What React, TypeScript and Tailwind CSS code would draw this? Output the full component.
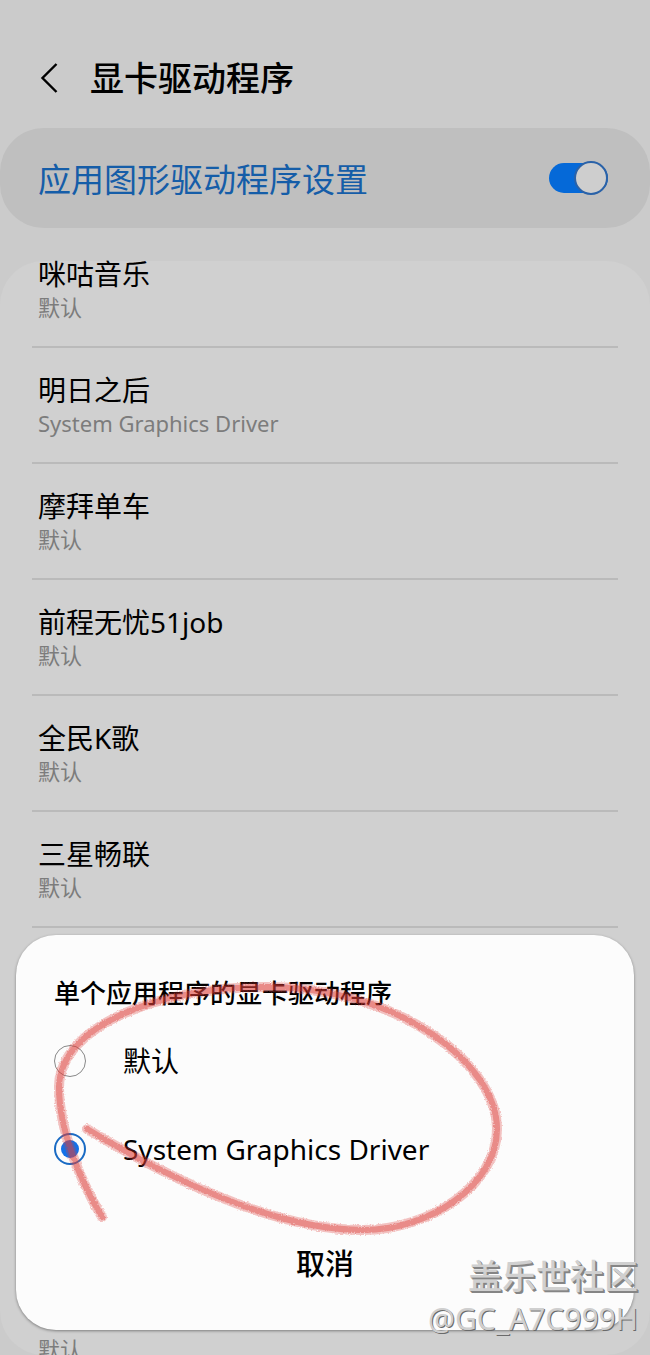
import { useState } from "react";

interface AppEntry {
  name: string;
  driver: string;
}

const DEFAULT_DRIVER = "默认";
const SYSTEM_DRIVER = "System Graphics Driver";

const apps: AppEntry[] = [
  { name: "咪咕音乐", driver: DEFAULT_DRIVER },
  { name: "明日之后", driver: SYSTEM_DRIVER },
  { name: "摩拜单车", driver: DEFAULT_DRIVER },
  { name: "前程无忧51job", driver: DEFAULT_DRIVER },
  { name: "全民K歌", driver: DEFAULT_DRIVER },
  { name: "三星畅联", driver: DEFAULT_DRIVER },
];

export default function App() {
  const [enabled, setEnabled] = useState(true);

  return (
    <div className="relative flex min-h-screen flex-col overflow-hidden bg-[#cbcbcb] font-['Noto_Sans','Noto_Sans_CJK_SC',sans-serif] text-black">
      <header className="flex h-32 items-center gap-7 px-9 pt-7">
        <button type="button" aria-label="返回" className="flex w-[26px] justify-center">
          <svg width="18" height="32" viewBox="0 0 18 32" fill="none" stroke="currentColor" strokeWidth="2.4">
            <path d="M16.5 2 2.5 16l14 14" />
          </svg>
        </button>
        <h1 className="text-[34px] leading-10 font-medium">显卡驱动程序</h1>
      </header>

      <label className="flex h-[100px] items-center justify-between rounded-[44px] bg-[#bfbfbf] pr-[42px] pl-[38px]">
        <span className="pt-1 text-[33px] leading-10 text-[#155da8]">应用图形驱动程序设置</span>
        <input
          type="checkbox"
          role="switch"
          checked={enabled}
          onChange={(e) => setEnabled(e.target.checked)}
          className="relative h-[30px] w-[59px] appearance-none rounded-full bg-[#8f8f8f] before:absolute before:-top-0.5 before:left-0 before:size-[34px] before:rounded-full before:border-2 before:border-[#2a62a8] before:bg-[#cecece] checked:bg-[#0569d8] checked:before:left-[25px]"
        />
      </label>

      <main className="mt-[33px] flex flex-1 flex-col rounded-[44px] bg-[#d0d0d0] px-8">
        <ul>
          {apps.map((app) => (
            <AppRow key={app.name} app={app} />
          ))}
        </ul>
        <p className="mt-auto h-[18px] px-1.5 text-[22px] leading-6 text-[#7c7c7c]">{DEFAULT_DRIVER}</p>
      </main>

      <DriverDialog />
      <Watermark />
    </div>
  );
}

function AppRow({ app }: { app: AppEntry }) {
  return (
    <li className="border-b-2 border-[#bababa] pt-6 pb-6 first:-mt-[5px] first:pt-0">
      <button type="button" className="block w-full px-1.5 text-left">
        <span className="block text-[28px] leading-9">{app.name}</span>
        <span className="block text-[22px] leading-[30px] text-[#7c7c7c]">{app.driver}</span>
      </button>
    </li>
  );
}

function DriverDialog() {
  const [selected, setSelected] = useState(SYSTEM_DRIVER);

  return (
    <section
      role="dialog"
      aria-labelledby="driver-title"
      className="absolute inset-x-4 bottom-[25px] rounded-[40px] bg-[#fcfcfc] px-[38px] pt-10 pb-[46px] shadow-[0_1px_3px_rgba(0,0,0,0.4)]"
    >
      <h2 id="driver-title" className="text-[26px] leading-9 font-medium">
        单个应用程序的显卡驱动程序
      </h2>
      <div className="mt-1.5">
        {[DEFAULT_DRIVER, SYSTEM_DRIVER].map((option) => (
          <label key={option} className="flex h-[88px] items-center gap-[37px]">
            <input
              type="radio"
              name="driver"
              checked={selected === option}
              onChange={() => setSelected(option)}
              className="grid size-8 appearance-none place-items-center rounded-full border border-[#888] before:size-[18px] before:rounded-full checked:border-2 checked:border-[#1a6bc4] checked:before:bg-[#1370e8]"
            />
            <span className="text-[28px] leading-9">{option}</span>
          </label>
        ))}
      </div>
      <div className="mt-[51px] flex justify-center">
        <button type="button" className="text-[29px] leading-10 font-medium">
          取消
        </button>
      </div>
      <MarkerCircle />
    </section>
  );
}

/* Hand-drawn red loop around the two options */
function MarkerCircle() {
  const loop =
    "M102 1217C80 1180 59 1130 59 1087C60 1025 160 987 267 987C400 987 497 1065 497 1129C497 1185 430 1230 363 1230C290 1230 200 1197 87 1129";

  return (
    <svg
      aria-hidden="true"
      width="618"
      height="395"
      viewBox="16 935 618 395"
      fill="none"
      strokeLinecap="round"
      className="pointer-events-none absolute top-0 left-0"
    >
      <filter id="crayon" x="-5%" y="-5%" width="110%" height="110%">
        <feTurbulence type="fractalNoise" baseFrequency="0.7" numOctaves="2" result="noise" />
        <feDisplacementMap in="SourceGraphic" in2="noise" scale="3" xChannelSelector="R" yChannelSelector="G" />
      </filter>
      <g filter="url(#crayon)" stroke="#dc3c36">
        <path d={loop} strokeWidth="10" strokeOpacity="0.3" />
        <path d={loop} strokeWidth="6" strokeOpacity="0.42" />
      </g>
    </svg>
  );
}

function Watermark() {
  return (
    <div className="pointer-events-none absolute right-3 bottom-4 text-right">
      <p className="text-[34px] leading-[46px] font-medium text-[#d0d0d0] [text-shadow:1px_1px_0_#858585,2px_2px_0_#858585]">
        盖乐世社区
      </p>
      <p className="text-[30px] leading-10 text-[#cfcfcf] [text-shadow:1px_1px_0_#6a6a6a]">
        @GC_A7C999H
      </p>
    </div>
  );
}
